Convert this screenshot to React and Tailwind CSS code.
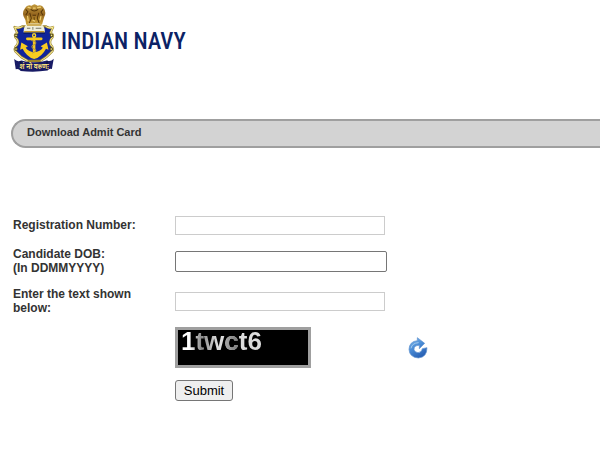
function NavyCrest() {
  return (
    <svg viewBox="36 9 138 210" preserveAspectRatio="none" className="h-[71px] w-[43px] shrink-0" role="img" aria-label="Indian Navy crest">
      <defs>
        <linearGradient id="lions" x1="0" y1="0" x2="0" y2="1">
          <stop offset="0" stopColor="#c39a3c" />
          <stop offset="0.5" stopColor="#94651f" />
          <stop offset="1" stopColor="#d3a838" />
        </linearGradient>
      </defs>
      <path d="M44 80 Q58 86 70 78 L144 78 Q156 86 168 80 Q162 92 160 97 Q172 102 165 112 Q155 120 160 132 Q171 141 166 151 Q154 162 146 169 L128 180 H86 L66 169 Q58 162 46 151 Q41 141 53 132 Q59 120 48 112 Q41 102 53 97 Q50 92 44 80 Z" fill="#10249a" stroke="#9c852c" strokeWidth="7" strokeLinejoin="round" />
      <path d="M44 80 Q58 86 70 78 M144 78 Q156 86 168 80 Q162 92 160 97 Q172 102 165 112 Q155 120 160 132 Q171 141 166 151 Q154 162 146 169 L128 180 M86 180 L66 169 Q58 162 46 151 Q41 141 53 132 Q59 120 48 112 Q41 102 53 97 Q50 92 44 80" fill="none" stroke="#f6ea9a" strokeWidth="3" />
      <g fill="#f6ea9a" stroke="#514814" strokeWidth="3">
        <circle cx="49" cy="105" r="4" />
        <circle cx="163" cy="105" r="4" />
        <circle cx="49" cy="145" r="4" />
        <circle cx="162" cy="145" r="4" />
      </g>
      <path d="M78 24 Q85 12 99 17 Q108 8 118 17 Q132 12 138 24 Q147 37 140 49 L136 61 L132 74 H82 L79 59 L73 48 Q68 36 78 24 Z" fill="url(#lions)" />
      <path d="M80 28 L87 35 L80 45 M136 28 L129 36 L136 46 M96 28 Q107 37 120 28 M93 38 L98 54 L91 70 M122 38 L117 54 L124 70 M102 45 H113 M107 51 V66" fill="none" stroke="#553507" strokeWidth="3" />
      <path d="M86 21 L96 24 M117 23 L129 21 M86 47 L88 63 M129 48 L126 60 M103 24 H112 M102 60 L110 63" stroke="#f0cf70" strokeWidth="4" fill="none" />
      <path d="M73 96 Q73 74 90 70 H124 Q141 74 142 96 Z" fill="#f0efdb" />
      <path d="M84 74 H130 M75 94 H140" stroke="#c49a30" strokeWidth="4" />
      <path d="M84 84 H95 M103 80 V88 M112 84 H130" stroke="#777a69" strokeWidth="3" />
      <path d="M73 98 H142" stroke="#0e1645" strokeWidth="3" />
      <circle cx="107" cy="105" r="5" fill="none" stroke="#f7d42c" strokeWidth="4" />
      <path d="M85 115 H130 M107 110 V158" stroke="#f5c91f" strokeWidth="8" strokeLinecap="round" />
      <path d="M62 147 L66 126 L87 137 L80 141 Q88 152 107 155 Q127 152 135 141 L128 137 L148 126 L153 147 L145 144 Q132 168 107 175 Q83 168 70 144 Z" fill="#f8cc20" />
      <path d="M98 120 Q121 124 108 132 Q91 138 108 146 Q120 151 101 157" fill="none" stroke="#b59a3e" strokeWidth="3" />
      <path d="M43 175 Q53 185 66 179 Q106 190 148 179 Q160 184 170 174 L164 204 Q156 201 150 209 Q106 215 64 210 Q57 202 48 205 Z" fill="#181b65" />
      <path d="M64 181 L67 207 M149 180 L146 207" stroke="#080d35" strokeWidth="3" />
      <text x="107" y="203" textAnchor="middle" className="fill-[#f3dd7c] font-['Noto_Sans_Devanagari','Noto_Sans',sans-serif] text-[21px] font-bold">शं नो वरुणः</text>
    </svg>
  );
}

function RefreshIcon() {
  return (
    <svg viewBox="0 0 60 66" className="h-[22px] w-5" aria-hidden="true">
      <defs>
        <linearGradient id="refresh" x1="0" y1="0" x2="0.6" y2="1">
          <stop offset="0" stopColor="#82b9ea" />
          <stop offset="0.5" stopColor="#4a8cd6" />
          <stop offset="1" stopColor="#2860b4" />
        </linearGradient>
      </defs>
      <path d="M28 2 L50 19 L34 35 V25 Q18 25 18 37 Q19 46 30 47 Q41 46 43 35 L57 32 Q57 61 31 63 Q4 61 3 37 Q4 13 28 11 Z" fill="url(#refresh)" stroke="#5d91cf" strokeWidth="2" />
      <path d="M9 34 Q12 18 32 17" fill="none" stroke="#a3cbee" strokeWidth="3" />
    </svg>
  );
}

const label = "w-[162px] shrink-0 pr-6 text-[12px] leading-[14px] font-bold text-[#333]";
const field = "h-[19px] w-[210px] border border-[#ccc] bg-white px-1 text-[13px] outline-none";

export default function App() {
  return (
    <div className="bg-white font-['Liberation_Sans',Arial,sans-serif] text-[#333]">
      <header className="flex items-center gap-1.5 pt-[3px] pl-3">
        <NavyCrest />
        <h1 className="pt-1.5 font-['Roboto_Condensed','Open_Sans_Condensed',sans-serif] text-[23px] leading-8 font-medium whitespace-nowrap text-[#0b2265]">INDIAN NAVY</h1>
      </header>
      <main className="pt-[45px]">
        <h2 className="ml-[11px] flex h-[29px] items-center rounded-l-full border-2 border-r-0 border-[#9f9f9f] bg-[#d3d3d3] pb-[3px] pl-[14px] text-[11px] font-bold">
          Download Admit Card
        </h2>
        <form className="mt-[67px] pl-[13px]" onSubmit={(e) => e.preventDefault()}>
          <div className="flex h-5 items-center">
            <label htmlFor="registration" className={label}>Registration Number:</label>
            <input id="registration" type="text" className={field} />
          </div>
          <div className="mt-3 flex items-center">
            <label htmlFor="dob" className={label}>Candidate DOB:<br />(In DDMMYYYY)</label>
            <input id="dob" type="text" className="h-[21px] w-[212px] rounded-[2px] border border-[#767676] bg-white px-1 text-[13px] outline-none" />
          </div>
          <div className="mt-3 flex items-center">
            <label htmlFor="captcha" className={label}>Enter the text shown below:</label>
            <input id="captcha" type="text" className={field} />
          </div>
          <div className="mt-3 flex items-center pl-[162px]">
            <div className="h-[41px] w-[136px] border-[3px] border-[#9f9f9f] bg-black pl-[3px]">
              <span className="block w-fit bg-linear-to-r from-white from-10% via-[#8a8a8a] via-25% to-[#ddd] to-45% bg-clip-text text-[26px] leading-[22px] font-bold text-transparent">
                1tw<span className="bg-linear-to-r from-[#aaa] to-[#777] bg-clip-text">c</span>t6
              </span>
            </div>
            <button type="button" aria-label="Refresh the text" className="ml-[97px]">
              <RefreshIcon />
            </button>
          </div>
          <div className="mt-3 pl-[162px]">
            <button type="submit" className="flex h-[21px] w-[58px] items-center justify-center rounded-[3px] border border-[#767676] bg-[#efefef] text-[13px] text-black">Submit</button>
          </div>
        </form>
      </main>
    </div>
  );
}
